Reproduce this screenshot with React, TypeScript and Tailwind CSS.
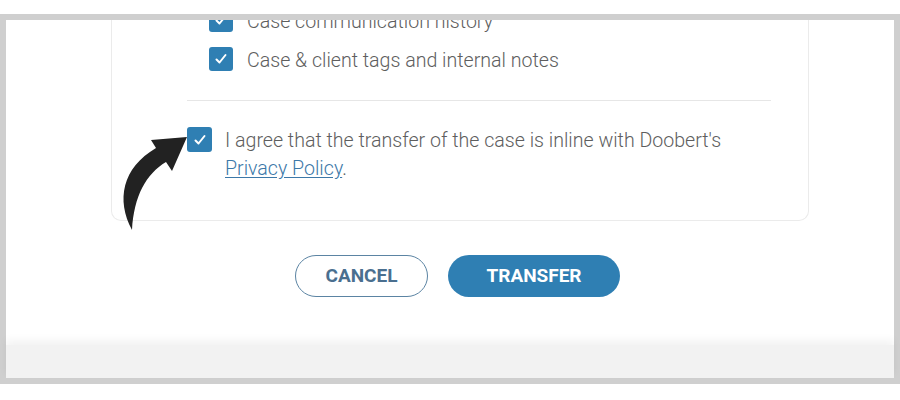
import React from 'react';

const font = { fontFamily: 'Roboto, "Liberation Sans", sans-serif' };

function Check({ size = 24 }: { size?: number }) {
  return (
    <span
      className="flex shrink-0 items-center justify-center rounded-[3px] bg-[#2f7fb3]"
      style={{ width: size, height: size }}
    >
      <svg width="16" height="16" viewBox="0 0 16 16" fill="none">
        <path d="M3.5 8.5l3 3 6-7.5" stroke="#fff" strokeWidth={2} strokeLinecap="round" strokeLinejoin="round" />
      </svg>
    </span>
  );
}

// black curved callout arrow pointing at the consent checkbox
function Arrow() {
  return (
    <svg className="absolute left-[110px] top-[120px]" width="90" height="115" viewBox="0 0 90 115">
      <path
        d="M22 110 C6 80, 12 48, 46 28 L41 20 L77 17 L62 51 L56 42 C36 54, 24 76, 22 110 Z"
        fill="#222"
      />
    </svg>
  );
}

export default function App() {
  return (
    <div className="relative h-[400px] w-[900px] bg-white pt-[14px]" style={font}>
      <div className="flex h-[370px] flex-col border-[6px] border-[#cfcfcf] bg-white">
        {/* dialog body */}
        <div className="flex-1 overflow-hidden">
          <div className="ml-[105px] mr-[85px] mt-[-12px] rounded-b-[10px] border border-t-0 border-[#ebebeb] pb-[37px] pl-[75px] pr-[37px]">
            <div className="flex flex-col gap-[15px] pl-[22px]">
              <div className="flex h-[24px] items-center gap-[14px]">
                <Check />
                <span className="pt-[3px] text-[19.6px] font-light text-[#5e5e5e]">Case communication history</span>
              </div>
              <div className="flex h-[24px] items-center gap-[14px]">
                <Check />
                <span className="pt-[3px] text-[19.6px] font-light text-[#5e5e5e]">Case &amp; client tags and internal notes</span>
              </div>
            </div>
            <div className="mt-[29px] h-px bg-[#e6e6e6]" />
            <div className="mt-[24px] flex items-start gap-[13px]">
              <div className="mt-[2px]">
                <Check size={25} />
              </div>
              <p className="pt-[2px] text-[19.6px] font-light leading-[28px] text-[#5e5e5e]">
                I agree that the transfer of the case is inline with Doobert's
                <br />
                <a className="text-[#3c78a8] underline underline-offset-2">Privacy Policy</a>.
              </p>
            </div>
          </div>

          <div className="mt-[34px] flex justify-center gap-[20px] pl-[15px]">
            <button className="h-[42px] w-[133px] rounded-full border-[1.5px] border-[#5b84a3] text-[19px] font-bold text-[#4a6f8f]">
              CANCEL
            </button>
            <button className="h-[42px] w-[172px] rounded-full bg-[#2f7fb3] text-[19px] font-bold text-white">
              TRANSFER
            </button>
          </div>
        </div>

        {/* footer strip */}
        <div className="h-[33px] bg-[#f2f2f2] shadow-[0_-5px_8px_rgba(0,0,0,0.05)]" />
      </div>
      <Arrow />
    </div>
  );
}
